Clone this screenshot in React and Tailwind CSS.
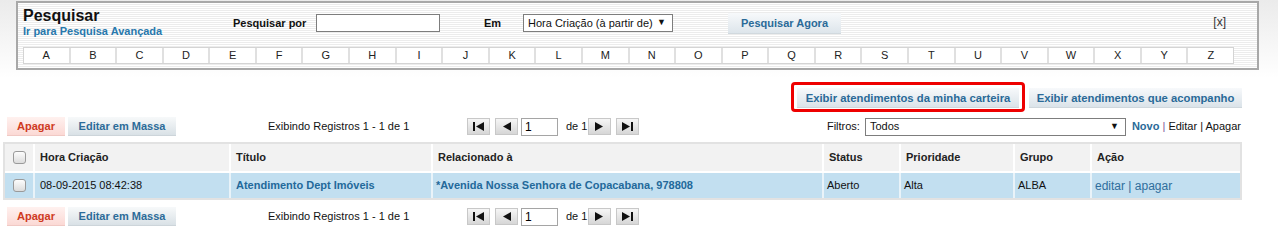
import React from "react";

const letters = "ABCDEFGHIJKLMNOPQRSTUVWXYZ".split("");

const columns = [
  { key: "hora", title: "Hora Criação", w: "w-[194px]" },
  { key: "titulo", title: "Título", w: "w-[200px]" },
  { key: "rel", title: "Relacionado à", w: "w-[389px]" },
  { key: "status", title: "Status", w: "w-[75px]" },
  { key: "prio", title: "Prioridade", w: "w-[112px]" },
  { key: "grupo", title: "Grupo", w: "w-[75px]" },
  { key: "acao", title: "Ação", w: "w-[148px]" },
];

const Checkbox = () => (
  <span className="block w-[13px] h-[13px] rounded-[3px] border border-[#9a9a9a] bg-[linear-gradient(to_bottom,#fdfdfd,#dcdcdc)]" />
);

const PagerBtn = ({ kind }) => (
  <button className="flex items-center justify-center w-[23px] h-[17px] border border-[#c8c8c8] bg-[linear-gradient(to_bottom,#f6f6f6,#d6d6d6)]">
    <svg width="13" height="9" viewBox="0 0 13 9">
      {kind === "first" && (
        <>
          <rect x="1" y="0" width="2" height="9" fill="#111" />
          <polygon points="12,0 12,9 4,4.5" fill="#111" />
        </>
      )}
      {kind === "prev" && <polygon points="11,0 11,9 3,4.5" fill="#111" />}
      {kind === "next" && <polygon points="2,0 2,9 10,4.5" fill="#111" />}
      {kind === "last" && (
        <>
          <polygon points="1,0 1,9 9,4.5" fill="#111" />
          <rect x="10" y="0" width="2" height="9" fill="#111" />
        </>
      )}
    </svg>
  </button>
);

const Toolbar = ({ showFilters }) => (
  <div className="flex items-center h-[19px] text-[11px]">
    <button className="ml-[7px] w-[58px] h-[19px] font-bold text-[#cf3b1f] bg-[linear-gradient(to_bottom,#fff1ef,#fbd9d5)] border-b border-[#f0c9c4]">
      Apagar
    </button>
    <button className="ml-[3px] w-[108px] h-[19px] font-bold text-[#2c6b99] bg-[linear-gradient(to_bottom,#f7f9fa,#d9e1e6)] border-b border-[#cdd5da]">
      Editar em Massa
    </button>
    <span className="ml-[92px] w-[199px] text-[#111]">Exibindo Registros 1 - 1 de 1</span>
    <div className="flex items-center">
      <PagerBtn kind="first" />
      <span className="w-[5px]" />
      <PagerBtn kind="prev" />
      <div className="ml-[3px] w-[37px] h-[18px] border border-[#a5a5a5] bg-white pl-[3px] leading-[16px] text-[12px]">1</div>
      <span className="ml-[8px] w-[22px] text-[#111]">de 1</span>
      <PagerBtn kind="next" />
      <span className="w-[5px]" />
      <PagerBtn kind="last" />
    </div>
    {showFilters && (
      <div className="ml-auto mr-[37px] flex items-center">
        <span className="text-[#111] mr-[5px]">Filtros:</span>
        <div className="w-[261px] h-[18px] border border-[#7d7d7d] bg-white flex items-center justify-between pl-[4px] pr-[6px] text-[11px] text-[#111]">
          <span>Todos</span>
          <span className="text-[9px]">▼</span>
        </div>
        <span className="ml-[6px] text-[11px]">
          <a className="font-bold text-[#2a6a98]">Novo</a>
          <span className="text-[#7a5a9a]"> | </span>
          <a className="text-[#111]">Editar</a>
          <span className="text-[#111]"> | </span>
          <a className="text-[#111]">Apagar</a>
        </span>
      </div>
    )}
  </div>
);

export default function App() {
  return (
    <div
      className="w-[1278px] h-[242px] bg-white overflow-hidden"
      style={{ fontFamily: '"Liberation Sans", Arial, sans-serif' }}
    >
      <div className="pt-[1px] bg-[linear-gradient(to_bottom,#ebebeb,#ffffff_78px)]">
        {/* search box */}
        <div className="ml-[16px] w-[1243px] h-[69px] border-2 border-[#a8a8a8] bg-[repeating-linear-gradient(to_bottom,#ffffff_0px,#ffffff_1px,#ececec_1px,#ececec_2px)]">
          <div className="flex h-[41px]">
            <div className="pl-[5px] w-[215px]">
              <div className="text-[16px] font-bold leading-[18px] pt-[4px] text-[#111]">Pesquisar</div>
              <a className="block text-[11px] font-bold leading-[13px] text-[#2778ad]">Ir para Pesquisa Avançada</a>
            </div>
            <div className="flex items-start pt-[11px] text-[11px] font-bold text-[#111]">
              <span className="w-[83px] leading-[18px]">Pesquisar por</span>
              <div className="w-[124px] h-[18px] border border-[#7d7d7d] bg-white" />
              <span className="ml-[44px] w-[39px] leading-[18px]">Em</span>
              <div className="relative w-[150px] h-[18px] border border-[#7d7d7d] bg-white flex items-center pl-[4px] font-normal text-[11px] overflow-hidden">
                <span className="whitespace-nowrap">Hora Criação (à partir de)</span>
                <span className="absolute right-0 top-0 h-full flex items-center pl-[3px] pr-[6px] text-[9px] bg-white">▼</span>
              </div>
              <button className="ml-[55px] -mt-[1px] w-[113px] h-[21px] font-bold text-[#2a6a98] bg-[linear-gradient(to_bottom,#f7f9fb,#dde5eb)] border-b border-[#d1d9de]">
                Pesquisar Agora
              </button>
            </div>
            <span className="ml-auto mr-[31px] pt-[10px] text-[12px] text-[#333]">[x]</span>
          </div>
          <div className="ml-[5px] mt-[3px] flex w-[1211px] h-[17px] border border-[#d4d4d4] bg-white">
            {letters.map((l, i) => (
              <div
                key={l}
                className={`flex-1 flex items-center justify-center text-[11px] text-[#222] ${i > 0 ? "border-l-2 border-[#e0e0e0]" : ""}`}
              >
                {l}
              </div>
            ))}
          </div>
        </div>

        {/* view buttons */}
        <div className="flex items-start justify-end h-[30px] mt-[12px] mr-[36px]">
          <div className="h-[30px] border-[3px] border-[#ee0000] rounded-[4px] p-[3px] pb-[1px]">
            <button className="block w-[222px] h-[20px] text-[11.3px] leading-[20px] font-bold text-[#2a6a98] bg-[linear-gradient(to_bottom,#f7f9fb,#dbe3e9)] border-b border-[#cfd7dc]">
              Exibir atendimentos da minha carteira
            </button>
          </div>
          <button className="block ml-[4px] mt-[6px] w-[213px] h-[20px] text-[11.3px] leading-[20px] font-bold text-[#2a6a98] bg-[linear-gradient(to_bottom,#f7f9fb,#dbe3e9)] border-b border-[#cfd7dc]">
            Exibir atendimentos que acompanho
          </button>
        </div>
      </div>

      <div className="mt-[5px]">
        <Toolbar showFilters />
      </div>

      {/* table */}
      <div className="ml-[3px] mt-[6px] w-[1239px] border-2 border-[#e2e2e2] bg-white text-[11px]">
        <div className="flex h-[27px] bg-white gap-[2px]">
          <div className="w-[28px] bg-[#f2f2f2] flex items-center justify-center">
            <Checkbox />
          </div>
          {columns.map((c) => (
            <div key={c.key} className={`${c.w} bg-[#f2f2f2] flex items-center px-[5px] font-bold text-[#222]`}>
              {c.title}
            </div>
          ))}
        </div>
        <div className="flex h-[25px] gap-[2px] mt-[2px] bg-[#e9f3f9]">
          <div className="w-[28px] bg-[#c2dff0] flex items-center justify-center">
            <Checkbox />
          </div>
          <div className="w-[194px] bg-[#c2dff0] flex items-center px-[5px] text-[#111]">08-09-2015 08:42:38</div>
          <div className="w-[200px] bg-[#c2dff0] flex items-center px-[5px] font-bold text-[#23699a]">Atendimento Dept Imóveis</div>
          <div className="w-[389px] bg-[#c2dff0] flex items-center px-[3px] font-bold text-[#23699a]">*Avenida Nossa Senhora de Copacabana, 978808</div>
          <div className="w-[75px] bg-[#c2dff0] flex items-center px-[3px] text-[#111]">Aberto</div>
          <div className="w-[112px] bg-[#c2dff0] flex items-center px-[3px] text-[#111]">Alta</div>
          <div className="w-[75px] bg-[#c2dff0] flex items-center px-[3px] text-[#111]">ALBA</div>
          <div className="w-[148px] bg-[#c2dff0] flex items-center px-[3px] text-[12px] text-[#2f6e9c]">editar | apagar</div>
        </div>
      </div>

      <div className="mt-[7px]">
        <Toolbar />
      </div>
    </div>
  );
}
